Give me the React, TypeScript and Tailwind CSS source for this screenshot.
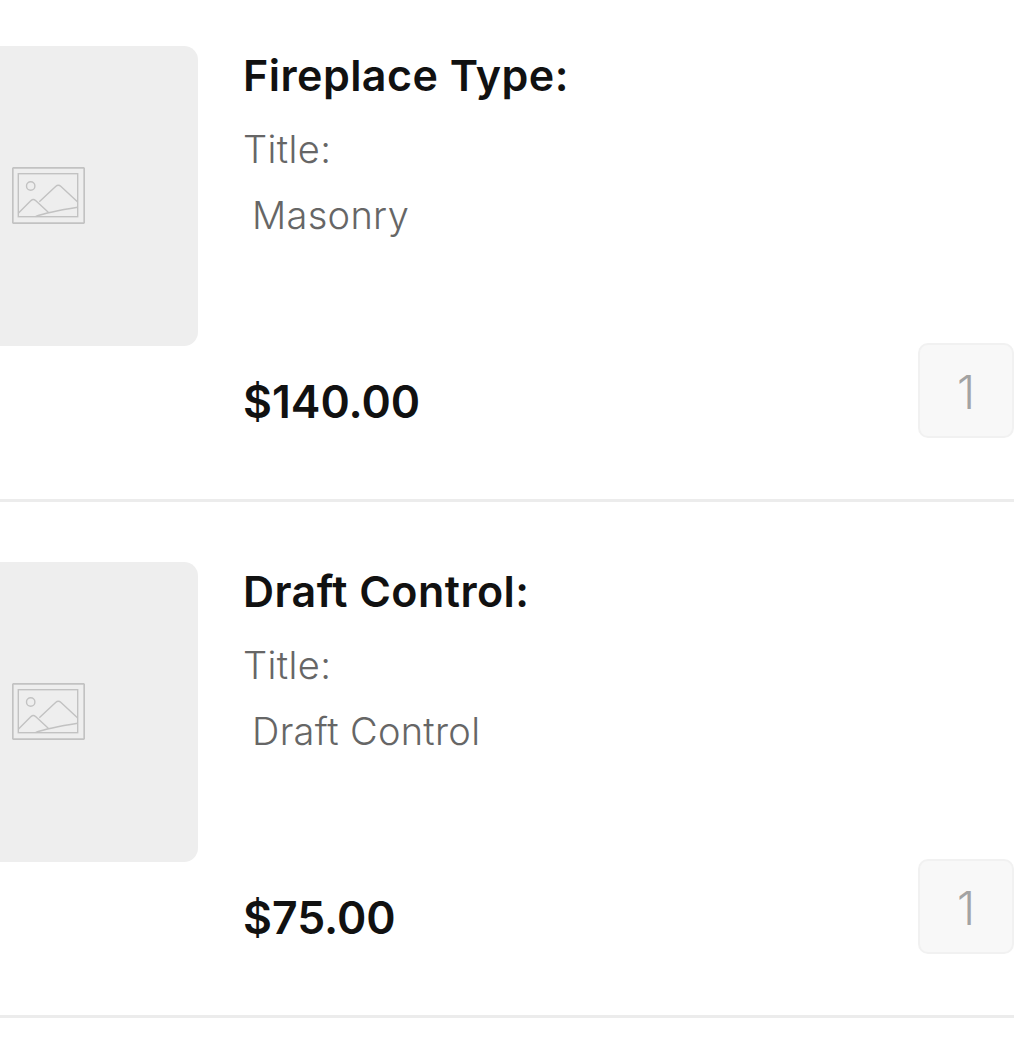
const items = [
  { name: "Fireplace Type:", value: "Masonry", price: "$140.00" },
  { name: "Draft Control:", value: "Draft Control", price: "$75.00" },
];

function PlaceholderIcon() {
  return (
    <svg width="73" height="57" viewBox="0 0 73 57" fill="none" stroke="#c2c2c2" strokeWidth="1.4">
      <rect x="0.8" y="0.8" width="71.4" height="55.4" rx="1" strokeWidth="1.7" />
      <rect x="6.3" y="6.7" width="59.4" height="43" />
      <circle cx="18.7" cy="19" r="4.2" />
      <path d="M6.3 46.3 L19 33.6 Q21.3 31.6 23.6 33.6 L36.3 45.3" />
      <path d="M27.3 34.7 L43.6 19.5 Q46.3 17.2 49 19.5 L65.7 35" />
      <path d="M23.7 49.5 Q36 45 65.7 40.3" />
    </svg>
  );
}

export default function App() {
  return (
    <div className="min-h-[1056px] bg-white pt-[46px] pr-[15px] overflow-hidden font-['Inter',sans-serif]">
      {items.map((item) => (
        <div key={item.name} className="flex gap-[45px] border-b-[3px] border-[#ececec] pb-[61px] mb-[60px] last:mb-0">
          <div className="-ml-[102px] w-[300px] h-[300px] shrink-0 rounded-[14px] bg-[#eeeeee] flex items-center justify-center pb-[2px]">
            <PlaceholderIcon />
          </div>
          <div className="flex-1 h-[392px] flex flex-col justify-between">
            <div>
              <h2 className="text-[43px] leading-[58px] font-semibold tracking-[0.45px] text-[#111111]">{item.name}</h2>
              <p className="mt-[12px] text-[38px] leading-[66px] font-light tracking-[0.4px] text-[#666666]">Title:</p>
              <p className="pl-[9px] text-[38px] leading-[66px] font-light tracking-[0.3px] text-[#666666]">{item.value}</p>
            </div>
            <div className="flex justify-between items-start">
              <span className="mt-[29px] text-[44.5px] leading-[60px] font-semibold text-[#111111]">{item.price}</span>
              <div className="w-[96px] h-[95px] rounded-[10px] border-2 border-[#f1f1f1] bg-[#f8f8f8] flex items-center justify-center pt-[4px] text-[46px] font-light text-[#a3a3a3]">
                1
              </div>
            </div>
          </div>
        </div>
      ))}
    </div>
  );
}
